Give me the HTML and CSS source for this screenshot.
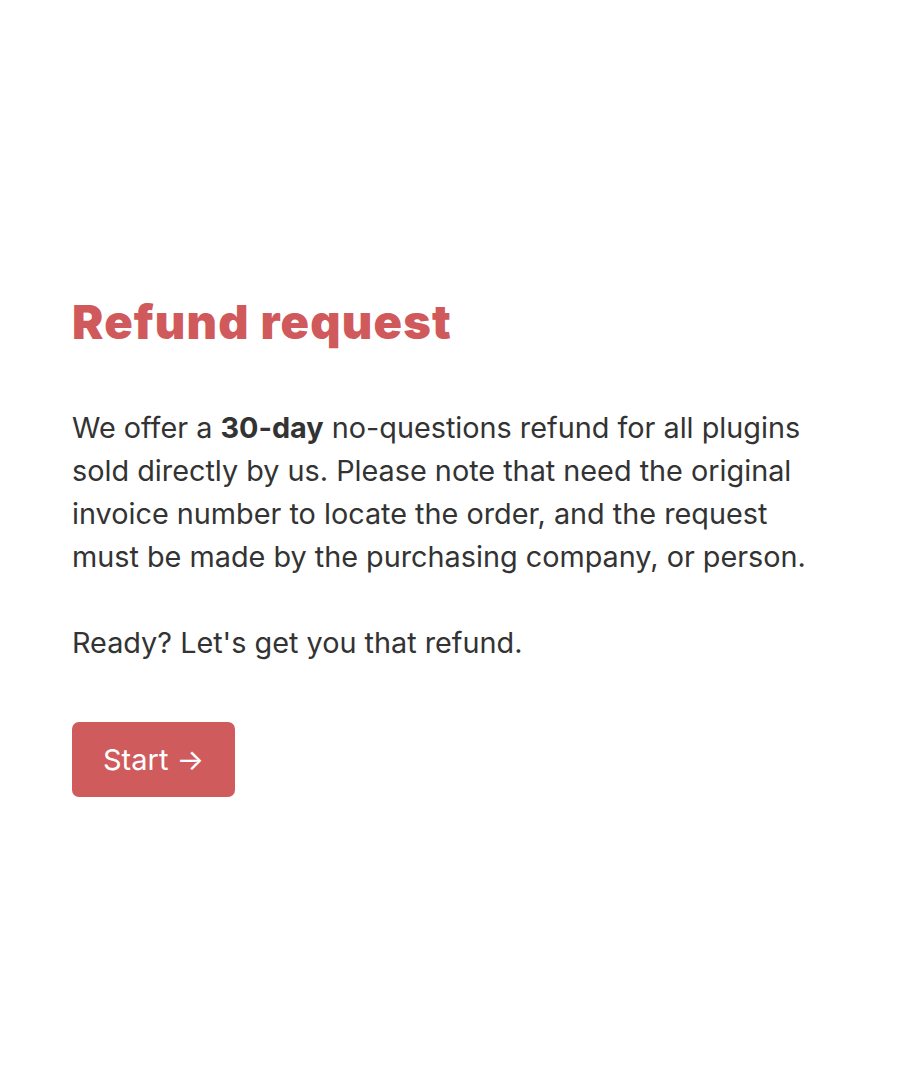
FILE: index.html
```html
<!DOCTYPE html>
<html lang="en">
<head>
  <meta charset="UTF-8">
  <title>Refund request</title>
  <link rel="stylesheet" href="styles.css">
</head>
<body>
  <div class="page">
    <div class="content">
      <h1>Refund request</h1>
      <p>We offer a <strong>30-day</strong> no-questions refund for all plugins sold directly by us. Please note that need the original invoice number to locate the order, and the request must be made by the purchasing company, or person.</p>
      <p>Ready? Let's get you that refund.</p>
      <button type="button" class="start-btn">Start &rarr;</button>
    </div>
  </div>
</body>
</html>
```

FILE: styles.css
```css
body {
  margin: 0;
  font-family: Inter, "Noto Sans", sans-serif;
  background-color: #ffffff;
  color: #333333;
}

.page {
  box-sizing: border-box;
  min-height: 100vh;
  display: flex;
  align-items: center;
  padding: 6px 72px 0;
}

.content {
  max-width: 756px;
}

h1 {
  margin: 0 0 56px;
  font-size: 47px;
  line-height: 56px;
  font-weight: 900;
  color: #d05a5b;
  letter-spacing: 1.2px;
}

p {
  margin: 0 0 43px;
  font-size: 28.8px;
  line-height: 43px;
}

p:last-of-type {
  margin-bottom: 58px;
}

.start-btn {
  padding: 20px 31px;
  font-family: inherit;
  font-size: 29px;
  line-height: 35px;
  color: white;
  background-color: #cf5b5c;
  border: none;
  border-radius: 7px;
  cursor: pointer;
}
```
